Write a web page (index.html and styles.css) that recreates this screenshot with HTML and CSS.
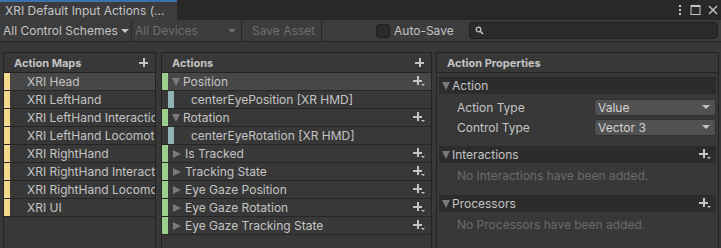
FILE: index.html
```html
<!DOCTYPE html>
<html>
<head>
<meta charset="utf-8">
<link rel="stylesheet" href="styles.css">
</head>
<body>
<div class="window">
  <div class="tabbar">
    <div class="tab">XRI Default Input Actions (...</div>
    <div class="winbtns">
      <svg class="wb" width="6" height="12" viewBox="0 0 6 12"><rect x="2" y="1" width="2" height="2" fill="#c4c4c4"/><rect x="2" y="5" width="2" height="2" fill="#c4c4c4"/><rect x="2" y="9" width="2" height="2" fill="#c4c4c4"/></svg>
      <svg class="wb" width="11" height="12" viewBox="0 0 11 12"><rect x="1" y="1.5" width="9" height="9" fill="none" stroke="#c4c4c4" stroke-width="1"/><rect x="1" y="1" width="9" height="2" fill="#c4c4c4"/></svg>
      <svg class="wb" width="10" height="12" viewBox="0 0 10 12"><path d="M1 2 L9 10 M9 2 L1 10" stroke="#c4c4c4" stroke-width="1.4"/></svg>
    </div>
  </div>
  <div class="toolbar">
    <div class="tb-drop schemes">All Control Schemes<span class="caret"></span></div>
    <div class="tb-drop devices dim">All Devices<span class="caret dimcaret"></span></div>
    <div class="tb-btn dim">Save Asset</div>
    <div class="autosave"><span class="checkbox"></span>Auto-Save</div>
    <div class="search">
      <svg width="9" height="9" viewBox="0 0 9 9"><circle cx="3.5" cy="3.5" r="2.3" fill="none" stroke="#c4c4c4" stroke-width="1.3"/><path d="M5.2 5.2 L8 8" stroke="#c4c4c4" stroke-width="1.6"/></svg>
    </div>
  </div>
  <div class="panels">
    <div class="panel maps">
      <div class="phead"><span>Action Maps</span><span class="plus"></span></div>
      <div class="row sel"><span class="stripe yellow"></span><span class="rtext map">XRI Head</span></div>
      <div class="row"><span class="stripe yellow"></span><span class="rtext map">XRI LeftHand</span></div>
      <div class="row"><span class="stripe yellow"></span><span class="rtext map">XRI LeftHand Interaction</span></div>
      <div class="row"><span class="stripe yellow"></span><span class="rtext map">XRI LeftHand Locomotion</span></div>
      <div class="row"><span class="stripe yellow"></span><span class="rtext map">XRI RightHand</span></div>
      <div class="row"><span class="stripe yellow"></span><span class="rtext map">XRI RightHand Interaction</span></div>
      <div class="row"><span class="stripe yellow"></span><span class="rtext map">XRI RightHand Locomotion</span></div>
      <div class="row"><span class="stripe yellow"></span><span class="rtext map">XRI UI</span></div>
    </div>
    <div class="panel actions">
      <div class="phead"><span>Actions</span><span class="plus"></span></div>
      <div class="row act sel"><span class="stripe green"></span><span class="tri down"></span><span class="rtext">Position</span><span class="plusdrop"></span></div>
      <div class="row act"><span class="stripe blue"></span><span class="rtext child">centerEyePosition [XR HMD]</span></div>
      <div class="row act"><span class="stripe green"></span><span class="tri down"></span><span class="rtext">Rotation</span><span class="plusdrop"></span></div>
      <div class="row act"><span class="stripe blue"></span><span class="rtext child">centerEyeRotation [XR HMD]</span></div>
      <div class="row act"><span class="stripe green"></span><span class="tri right"></span><span class="rtext">Is Tracked</span><span class="plusdrop"></span></div>
      <div class="row act"><span class="stripe green"></span><span class="tri right"></span><span class="rtext">Tracking State</span><span class="plusdrop"></span></div>
      <div class="row act"><span class="stripe green"></span><span class="tri right"></span><span class="rtext">Eye Gaze Position</span><span class="plusdrop"></span></div>
      <div class="row act"><span class="stripe green"></span><span class="tri right"></span><span class="rtext">Eye Gaze Rotation</span><span class="plusdrop"></span></div>
      <div class="row act"><span class="stripe green"></span><span class="tri right"></span><span class="rtext">Eye Gaze Tracking State</span><span class="plusdrop"></span></div>
    </div>
    <div class="panel props">
      <div class="phead"><span>Action Properties</span></div>
      <div class="pbody">
        <div class="fold"><span class="tri down small"></span>Action</div>
        <div class="field first"><span class="flabel">Action Type</span><div class="select">Value<span class="caret"></span></div></div>
        <div class="field"><span class="flabel">Control Type</span><div class="select">Vector 3<span class="caret"></span></div></div>
        <div class="fold gap"><span class="tri down small"></span>Interactions<span class="plusdrop"></span></div>
        <div class="empty">No Interactions have been added.</div>
        <div class="fold gap2"><span class="tri down small"></span>Processors<span class="plusdrop"></span></div>
        <div class="empty">No Processors have been added.</div>
      </div>
    </div>
  </div>
</div>
</body>
</html>
```
FILE: styles.css
```css
* { box-sizing: border-box; margin: 0; padding: 0; }
body {
  margin: 0;
  width: 721px;
  height: 248px;
  overflow: hidden;
  background: #383838;
  font-family: Inter, "Noto Sans", sans-serif;
  font-size: 12px;
  color: #c4c4c4;
}
.window { display: flex; flex-direction: column; height: 248px; }

.tabbar { height: 20px; background: #282828; display: flex; align-items: stretch; }
.tab {
  width: 177px;
  background: #3c3c3c;
  border-top: 2px solid #3a72b0;
  padding-left: 5px;
  line-height: 17px;
  white-space: nowrap;
}
.winbtns { margin-left: auto; display: flex; align-items: center; gap: 7px; padding-right: 3px; }
.wb { display: block; }

.toolbar {
  height: 22px;
  background: #3c3c3c;
  border-bottom: 1px solid #232323;
  display: flex;
  align-items: stretch;
}
.tb-drop, .tb-btn {
  display: flex; align-items: center;
  border-right: 1px solid #2a2a2a;
  white-space: nowrap;
}
.schemes { width: 132px; padding-left: 3px; }
.devices { width: 110px; padding-left: 3px; }
.tb-btn { width: 80px; padding-left: 10px; }
.dim { color: #6e6e6e; }
.caret {
  margin-left: auto; margin-right: 7px;
  width: 0; height: 0;
  border-left: 4px solid transparent; border-right: 4px solid transparent;
  border-top: 4px solid #c4c4c4;
}
.schemes .caret { margin-left: 3px; }
.devices .caret { margin-right: 5px; }
.dimcaret { border-top-color: #6e6e6e; }
.autosave { display: flex; align-items: center; margin-left: 54px; width: 93px; }
.checkbox {
  width: 14px; height: 14px; border-radius: 3px;
  background: #2a2a2a; border: 1px solid #1f1f1f;
  margin-right: 4px;
}
.search {
  flex: 1; margin: 2px 3px 2px 0;
  background: #2a2a2a; border: 1px solid #1e1e1e; border-radius: 4px;
  display: flex; align-items: center; padding-left: 5px;
}

.panels { flex: 1; display: flex; gap: 5px; padding: 10px 2px 0 3px; min-height: 0; }
.panel {
  background: #383838;
  border: 1px solid #232323;
  border-bottom: none;
  display: flex; flex-direction: column;
  overflow: hidden;
}
.maps { width: 153px; }
.actions { width: 271px; }
.props { flex: 1; margin-left: -1px; }
.phead {
  height: 20px; flex: none;
  border-bottom: 1px solid #232323;
  display: flex; align-items: center;
  padding-left: 10px; padding-right: 7px;
  font-weight: 700; font-size: 11px;
}
.plus {
  margin-left: auto; width: 9px; height: 9px; flex: none;
  background:
    linear-gradient(#c4c4c4, #c4c4c4) 0 3.5px / 9px 2px no-repeat,
    linear-gradient(#c4c4c4, #c4c4c4) 3.5px 0 / 2px 9px no-repeat;
}

.row {
  height: 18px; flex: none;
  border-bottom: 1px solid #262626;
  display: flex; align-items: center;
  white-space: nowrap;
}
.row.act { padding-right: 6px; }
.row.sel { background: #474747; }
.stripe { width: 6px; align-self: stretch; flex: none; }
.yellow { background: #f4d88e; }
.green { background: #9dcf8c; }
.blue { background: #8fb3b6; width: 6px; margin-left: 6px; }
.rtext { overflow: hidden; }
.map { margin-left: 17px; }
.child { margin-left: 17px; }
.tri { width: 0; height: 0; flex: none; }
.tri.down {
  margin-left: 4px; margin-right: 3px;
  border-left: 4.5px solid transparent; border-right: 4.5px solid transparent;
  border-top: 8px solid #7a7a7a;
}
.tri.right {
  margin-left: 5px; margin-right: 4px;
  border-top: 4.5px solid transparent; border-bottom: 4.5px solid transparent;
  border-left: 8px solid #7a7a7a;
}
.plusdrop {
  margin-left: auto; width: 12px; height: 11px; position: relative; flex: none;
  background:
    linear-gradient(#c4c4c4, #c4c4c4) 0 3.5px / 9px 2px no-repeat,
    linear-gradient(#c4c4c4, #c4c4c4) 3.5px 0 / 2px 9px no-repeat;
}
.plusdrop::after {
  content: ""; position: absolute; left: 8px; top: 8px;
  border-left: 2px solid transparent; border-right: 2px solid transparent;
  border-top: 2.5px solid #c4c4c4;
}

.pbody { padding: 4px 2px 0 2px; }
.fold {
  height: 17px; background: #2c2c2c;
  display: flex; align-items: center;
  padding-right: 5px;
}
.fold .tri.down.small { margin-left: 3px; margin-right: 2px; }
.fold.gap { margin-top: 9px; }
.fold.gap2 { margin-top: 8px; }
.field { height: 20px; display: flex; align-items: center; padding-left: 18px; }
.field.first { margin-top: 3px; }
.flabel { width: 137px; }
.select {
  width: 122px; height: 17px;
  background: #515151; border: 1px solid #303030; border-radius: 3px;
  display: flex; align-items: center; padding-left: 3px;
  color: #d2d2d2;
}
.select .caret { margin-right: 5px; }
.empty { height: 24px; display: flex; align-items: center; padding-left: 18px; color: #6b6b6b; }
```
